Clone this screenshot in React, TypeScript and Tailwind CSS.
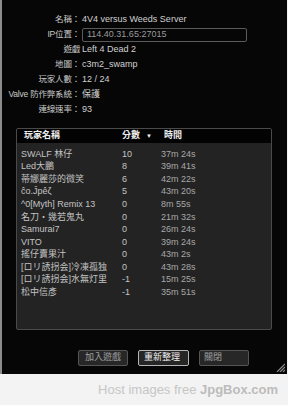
import React from 'react';

type Player = { name: string; score: string; time: string };

const players: Player[] = [
    { name: 'SWALF 林仔', score: '10', time: '37m 24s' },
    { name: 'Led大鵬', score: '8', time: '39m 41s' },
    { name: '蒂娜麗莎的微笑', score: '6', time: '42m 22s' },
    { name: 'ĉo.Ĵpêζ', score: '5', time: '43m 20s' },
    { name: '^0[Myth] Remix 13', score: '0', time: '8m 55s' },
    { name: '名刀・幾若鬼丸', score: '0', time: '21m 32s' },
    { name: 'Samurai7', score: '0', time: '26m 24s' },
    { name: 'VITO', score: '0', time: '39m 24s' },
    { name: '搖仔賣果汁', score: '0', time: '43m 2s' },
    { name: '[ロリ誘拐会]冷凍孤独', score: '0', time: '43m 28s' },
    { name: '[ロリ誘拐会]水無灯里', score: '-1', time: '15m 25s' },
    { name: '松中信彥', score: '-1', time: '35m 51s' },
];

const font = { fontFamily: '"Liberation Sans", "Noto Sans CJK TC", sans-serif' };

function InfoRow({ label, children }: { label: string; children: React.ReactNode }) {
    return (
        <div className="flex h-[15px] items-center">
            <div className="flex w-[78px] shrink-0 justify-end whitespace-nowrap text-[8.5px] tracking-[-0.2px] text-[#c8c8c8]">
                {label}
            </div>
            <div className="ml-[2px] flex-1 text-[#d0d0d0]">{children}</div>
        </div>
    );
}

export default function App() {
    return (
        <div className="flex h-[405px] w-[288px] flex-col bg-[#f3f3f3]" style={font}>
            <div className="relative h-[374px] w-[287px] border-l-2 border-[#8c8c8c] bg-[#060606] text-[9px]">
                <div className="pt-[12px]">
                    <InfoRow label="名稱：">4V4 versus Weeds Server</InfoRow>
                    <InfoRow label="IP位置：">
                        <div className="flex h-[14px] w-[165px] items-center rounded-[2px] border border-[#5a5a5a] pl-[4px] text-[#9a9a9a]">
                            114.40.31.65:27015
                        </div>
                    </InfoRow>
                    <InfoRow label="遊戲">Left 4 Dead 2</InfoRow>
                    <InfoRow label="地圖：">c3m2_swamp</InfoRow>
                    <InfoRow label="玩家人數：">12 / 24</InfoRow>
                    <InfoRow label="Valve 防作弊系統：">保護</InfoRow>
                    <InfoRow label="連線速率：">93</InfoRow>
                </div>

                <div className="ml-[14px] mt-[11px] h-[202px] w-[256px] overflow-hidden rounded-[2px] border border-[#4a4a4a] bg-[#232323]">
                    <div className="flex h-[14px] items-center bg-[#030303] font-bold text-[#eeeeee]">
                        <div className="w-[105px] pl-[7px]">玩家名稱</div>
                        <div className="flex w-[42px] items-center">
                            分數
                            <span className="ml-[6px] text-[6px]">▼</span>
                        </div>
                        <div>時間</div>
                    </div>
                    <div className="pt-[5px] text-[#c4c4c4]">
                        {players.map(p => (
                            <div key={p.name} className="flex h-[12.6px] items-center">
                                <div className="w-[105px] truncate pl-[4px]">{p.name}</div>
                                <div className="w-[39px]">{p.score}</div>
                                <div className="text-[#a8a8a8]">{p.time}</div>
                            </div>
                        ))}
                    </div>
                </div>

                <div className="ml-[76px] mt-[20px] flex gap-[10px] text-[9px]">
                    <button className="h-[16px] w-[50px] rounded-[2px] border border-[#555] bg-[#272727] pl-[6px] text-left text-[#a0a0a0]">
                        加入遊戲
                    </button>
                    <button className="h-[16px] w-[51px] rounded-[2px] border border-[#b5b5b5] bg-[#262626] pl-[5px] text-left text-[#f0f0f0]">
                        重新整理
                    </button>
                    <button className="h-[16px] w-[50px] rounded-[2px] border border-[#555] bg-[#272727] pl-[4px] text-left text-[#a0a0a0]">
                        關閉
                    </button>
                </div>

                <svg className="absolute bottom-[2px] right-[2px]" width="10" height="10" viewBox="0 0 10 10">
                    <path d="M2 10 L10 2 M5 10 L10 5 M8 10 L10 8" stroke="#8a8a8a" strokeWidth="1.2" />
                </svg>
            </div>
            <div className="flex flex-1 items-center justify-end pr-[10px] text-[13px] text-[#c6c6c6]">
                <span>Host images free&nbsp;</span>
                <span className="font-bold text-[#bcbcbc]">JpgBox.com</span>
            </div>
        </div>
    );
}
